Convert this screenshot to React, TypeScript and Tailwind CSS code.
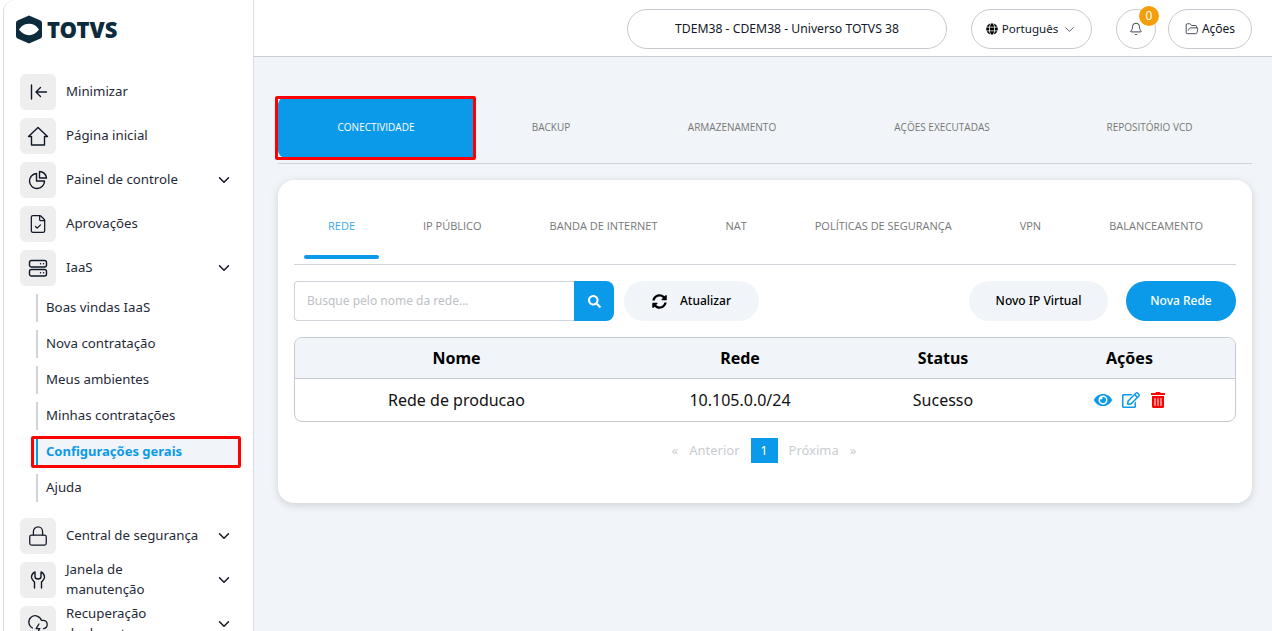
import { ReactNode } from "react";
import { Bell, ChevronDown, CloudLightning, FileCheck, FolderOpen, Lock } from "lucide-react";
import { FaEye, FaGlobe, FaRegEdit, FaSearch, FaSyncAlt, FaTrashAlt } from "react-icons/fa";

const sideFont = "font-['Noto_Sans',sans-serif]";

function Glyph({ children, size = 20 }: { children: ReactNode; size?: number }) {
  return (
    <svg width={size} height={size} viewBox={`0 0 ${size} ${size}`} fill="none" stroke="currentColor" strokeWidth="1.4" strokeLinejoin="round" strokeLinecap="round">
      {children}
    </svg>
  );
}

function NavItem({ icon, label, chevron }: { icon: ReactNode; label: ReactNode; chevron?: boolean }) {
  return (
    <div className="flex items-center h-9 mb-2 pl-4 pr-5">
      <div className="w-9 h-9 rounded-md bg-[#eeeeee] flex items-center justify-center text-[#111827] shrink-0">{icon}</div>
      <div className="ml-2.5 flex-1 pb-[2px] text-[13.25px] leading-[20px] text-[#1f2937]">{label}</div>
      {chevron && <ChevronDown size={18} className="text-[#111827]" />}
    </div>
  );
}

function SubItem({ label }: { label: string }) {
  return (
    <div className="ml-8 h-7 mb-2 border-l-2 border-[#d1d5db] pl-2 flex items-center text-[13.25px] text-[#1f2937]">{label}</div>
  );
}

function Sidebar() {
  return (
    <aside className={`${sideFont} w-[251px] ml-[3px] shrink-0 bg-white border-l border-r border-[#d9dde3] rounded-tl-xl overflow-hidden`}>
      <div className="h-[74px] flex items-start pt-[15px] pl-3">
        <svg width="26" height="29" viewBox="0 0 26 29">
          <path d="M13 0.500L24.500 5.500Q26 6.200 26 8V21Q26 22.800 24.500 23.500L13 28.500L1.500 23.500Q0 22.800 0 21V8Q0 6.200 1.500 5.500Z" fill="#0c2b3c" />
          <path d="M3 14.500C6 10.500 9 8.800 13 8.800C17 8.800 20 10.500 23 14.500C20 18.500 17 20.200 13 20.200C9 20.200 6 18.500 3 14.500Z" fill="white" />
        </svg>
        <span className="ml-[5px] mt-[1px] text-[22px] leading-[26px] font-black text-[#0c2b3c]">TOTVS</span>
      </div>
      <NavItem
        icon={
          <Glyph>
            <path d="M3.500 3V17M8 10H18.500M8 10L12.500 5.500M8 10L12.500 14.500" />
          </Glyph>
        }
        label="Minimizar"
      />
      <NavItem
        icon={
          <Glyph size={22}>
            <path d="M1.500 11.500L11 2.500L20.500 11.500H17.500V20H4.500V11.500H1.500Z" />
          </Glyph>
        }
        label="Página inicial"
      />
      <NavItem
        icon={
          <Glyph>
            <path d="M8.500 3.500A7.500 7.500 0 1 0 16.500 11H8.500V3.500Z" />
            <path d="M11.500 1.500A7 7 0 0 1 18.500 8H11.500V1.500Z" />
          </Glyph>
        }
        label="Painel de controle"
        chevron
      />
      <NavItem icon={<FileCheck size={20} strokeWidth={1.5} />} label="Aprovações" />
      <NavItem
        icon={
          <Glyph>
            <rect x="1.500" y="2.500" width="17" height="6.500" rx="2" />
            <rect x="1.500" y="11.500" width="17" height="6.500" rx="2" />
            <path d="M12.500 5.800H12.600M15.500 5.800H15.600M12.500 14.800H12.600M15.500 14.800H15.600" />
          </Glyph>
        }
        label="IaaS"
        chevron
      />
      <SubItem label="Boas vindas IaaS" />
      <SubItem label="Nova contratação" />
      <SubItem label="Meus ambientes" />
      <SubItem label="Minhas contratações" />
      <div className="ml-[27px] mr-[12px] h-8 -mt-[2px] border-[3px] border-[#ff0000] rounded-[2px] flex items-stretch bg-[#f1f5f9]">
        <div className="ml-[2px] flex-1 border-l-2 border-[#0b99ea] pl-2 flex items-center text-[13px] font-bold text-[#0b99ea]">Configurações gerais</div>
      </div>
      <div className="h-[6px]" />
      <SubItem label="Ajuda" />
      <div className="h-2" />
      <NavItem icon={<Lock size={22} strokeWidth={1.4} />} label="Central de segurança" chevron />
      <NavItem
        icon={
          <Glyph>
            <path d="M7 2C4.500 3.200 3.500 5.200 3.500 7.200C3.500 9.500 5.500 10.800 6.500 12V18M13 2C15.500 3.200 16.500 5.200 16.500 7.200C16.500 9.500 14.500 10.800 13.500 12V18M7 2V6.500C7 8 8.500 9 10 9C11.500 9 13 8 13 6.500V2" />
          </Glyph>
        }
        label={<>Janela de<br />manutenção</>}
        chevron
      />
      <NavItem icon={<CloudLightning size={22} strokeWidth={1.4} />} label={<>Recuperação<br />de desastres</>} chevron />
    </aside>
  );
}

function Header() {
  const pill = "h-10 rounded-full border border-[#c5c9cf] bg-white flex items-center justify-center text-[#111827]";
  return (
    <header className={`${sideFont} h-[57px] shrink-0 bg-white border-b border-[#c9cdd2] flex items-start justify-end pt-[9px] pr-5`}>
      <div className={`${pill} w-[320px] text-[12.2px]`}>TDEM38 - CDEM38 - Universo TOTVS 38</div>
      <div className={`${pill} w-[121px] ml-6 gap-1 text-[11.6px]`}>
        <FaGlobe size={12} className="text-black" />
        Português
        <ChevronDown size={15} strokeWidth={1.1} />
      </div>
      <div className={`${pill} w-10 ml-6 relative`}>
        <Bell size={14} strokeWidth={1.4} />
        <span className="absolute -top-[4px] left-[22px] w-5 h-5 rounded-full bg-[#f59e0b] text-white text-[12px] flex items-center justify-center">0</span>
      </div>
      <div className={`${pill} w-[84px] ml-3 gap-[3px] text-[12px]`}>
        <FolderOpen size={14} strokeWidth={1.3} />
        Ações
      </div>
    </header>
  );
}

function TopTabs() {
  const tabs = [
    { label: "BACKUP", w: "w-[152px] ml-px" },
    { label: "ARMAZENAMENTO", w: "w-[210px]" },
    { label: "AÇÕES EXECUTADAS", w: "w-[210px]" },
    { label: "REPOSITÓRIO VCD", w: "w-[205px]" },
  ];
  return (
    <div className="flex items-center ml-6 mr-5 mt-[40px] pb-[5px] border-b border-[#ced4da] h-[67px] relative font-['Open_Sans',sans-serif]">
      <div className="w-[196px] h-[61px] bg-[#0b99ea] rounded-l-lg text-white text-[10px] flex items-center justify-center">
        CONECTIVIDADE
      </div>
      {/* marcação vermelha do print */}
      <div className="absolute -left-[3px] -top-[1px] w-[201px] h-[64px] border-[3px] border-[#ff0000] rounded-[2px]" />
      {tabs.map((t) => (
        <div key={t.label} className={`${t.w} text-center text-[10px] text-[#777777]`}>{t.label}</div>
      ))}
    </div>
  );
}

function InnerTabs() {
  const tabs = ["IP PÚBLICO", "BANDA DE INTERNET", "NAT", "POLÍTICAS DE SEGURANÇA", "VPN", "BALANCEAMENTO"];
  return (
    <div className="flex gap-5 pl-[10px] h-[85px] border-b border-[#ced4da] text-[11px] font-['Open_Sans',sans-serif]">
      <div className="px-6 pt-[38px] relative text-[#39a9ee]">
        REDE
        <span className="absolute left-0 right-0 top-[75px] h-1 rounded-full bg-[#0b99ea]" />
      </div>
      {tabs.map((t) => (
        <div key={t} className="px-6 pt-[38px] text-[#777777] whitespace-nowrap">{t}</div>
      ))}
    </div>
  );
}

function Toolbar() {
  return (
    <div className="flex items-center h-10 mt-4">
      <div className="w-[280px] h-10 border border-[#ced4da] border-r-0 rounded-l bg-white pl-3 flex items-center text-[12px] text-[#bdc1c6]">
        Busque pelo nome da rede...
      </div>
      <div className="w-10 h-10 bg-[#0b99ea] rounded-r-lg text-white flex items-center justify-center">
        <FaSearch size={13} />
      </div>
      <div className="ml-[10px] w-[135px] h-10 rounded-full bg-[#f1f5f9] flex items-center justify-center gap-[13px] text-[12px] font-medium text-black">
        <FaSyncAlt size={15} />
        Atualizar
      </div>
      <div className="ml-auto w-[139px] h-10 rounded-full bg-[#f1f5f9] flex items-center justify-center text-[12px] font-medium text-black">
        Novo IP Virtual
      </div>
      <div className="ml-[18px] w-[110px] h-10 rounded-full bg-[#0b99ea] flex items-center justify-center text-[12px] font-medium text-white">
        Nova Rede
      </div>
    </div>
  );
}

function NetTable() {
  const cols = "grid grid-cols-[323px_244px_162px_1fr] items-center text-center";
  return (
    <div className="mt-4 border border-[#c5c9cf] rounded-lg overflow-hidden">
      <div className={`${cols} h-[41px] bg-[#f1f5f9] border-b border-[#c5c9cf] text-[16px] font-bold text-black`}>
        <div>Nome</div>
        <div>Rede</div>
        <div>Status</div>
        <div>Ações</div>
      </div>
      <div className={`${cols} h-[42px] text-[16px] text-[#111111]`}>
        <div>Rede de producao</div>
        <div>10.105.0.0/24</div>
        <div>Sucesso</div>
        <div className="flex items-center justify-center gap-[10px]">
          <FaEye size={18} className="text-[#0b99ea]" />
          <FaRegEdit size={18} className="text-[#0b99ea]" />
          <FaTrashAlt size={16} className="text-[#ff0000]" />
        </div>
      </div>
    </div>
  );
}

function Pagination() {
  return (
    <div className="flex items-center justify-center mt-4 pr-[2px] h-[25px] text-[13px] text-[#c9cdd2]">
      <span>«</span>
      <span className="ml-[11px]">Anterior</span>
      <span className="ml-[11px] w-[27px] h-[25px] bg-[#0b99ea] text-white flex items-center justify-center">1</span>
      <span className="ml-[11px]">Próxima</span>
      <span className="ml-[11px]">»</span>
    </div>
  );
}

export default function App() {
  return (
    <div className="h-[631px] w-[1272px] overflow-hidden flex bg-white font-['Noto_Sans',sans-serif]">
      <Sidebar />
      <main className="flex-1 flex flex-col bg-[#f1f5f9] min-w-0">
        <Header />
        <TopTabs />
        <section className="ml-6 mr-5 mt-4 h-[323px] bg-white rounded-2xl shadow-[0_2px_8px_rgba(0,0,0,0.15)] px-4">
          <InnerTabs />
          <Toolbar />
          <NetTable />
          <Pagination />
        </section>
      </main>
    </div>
  );
}
